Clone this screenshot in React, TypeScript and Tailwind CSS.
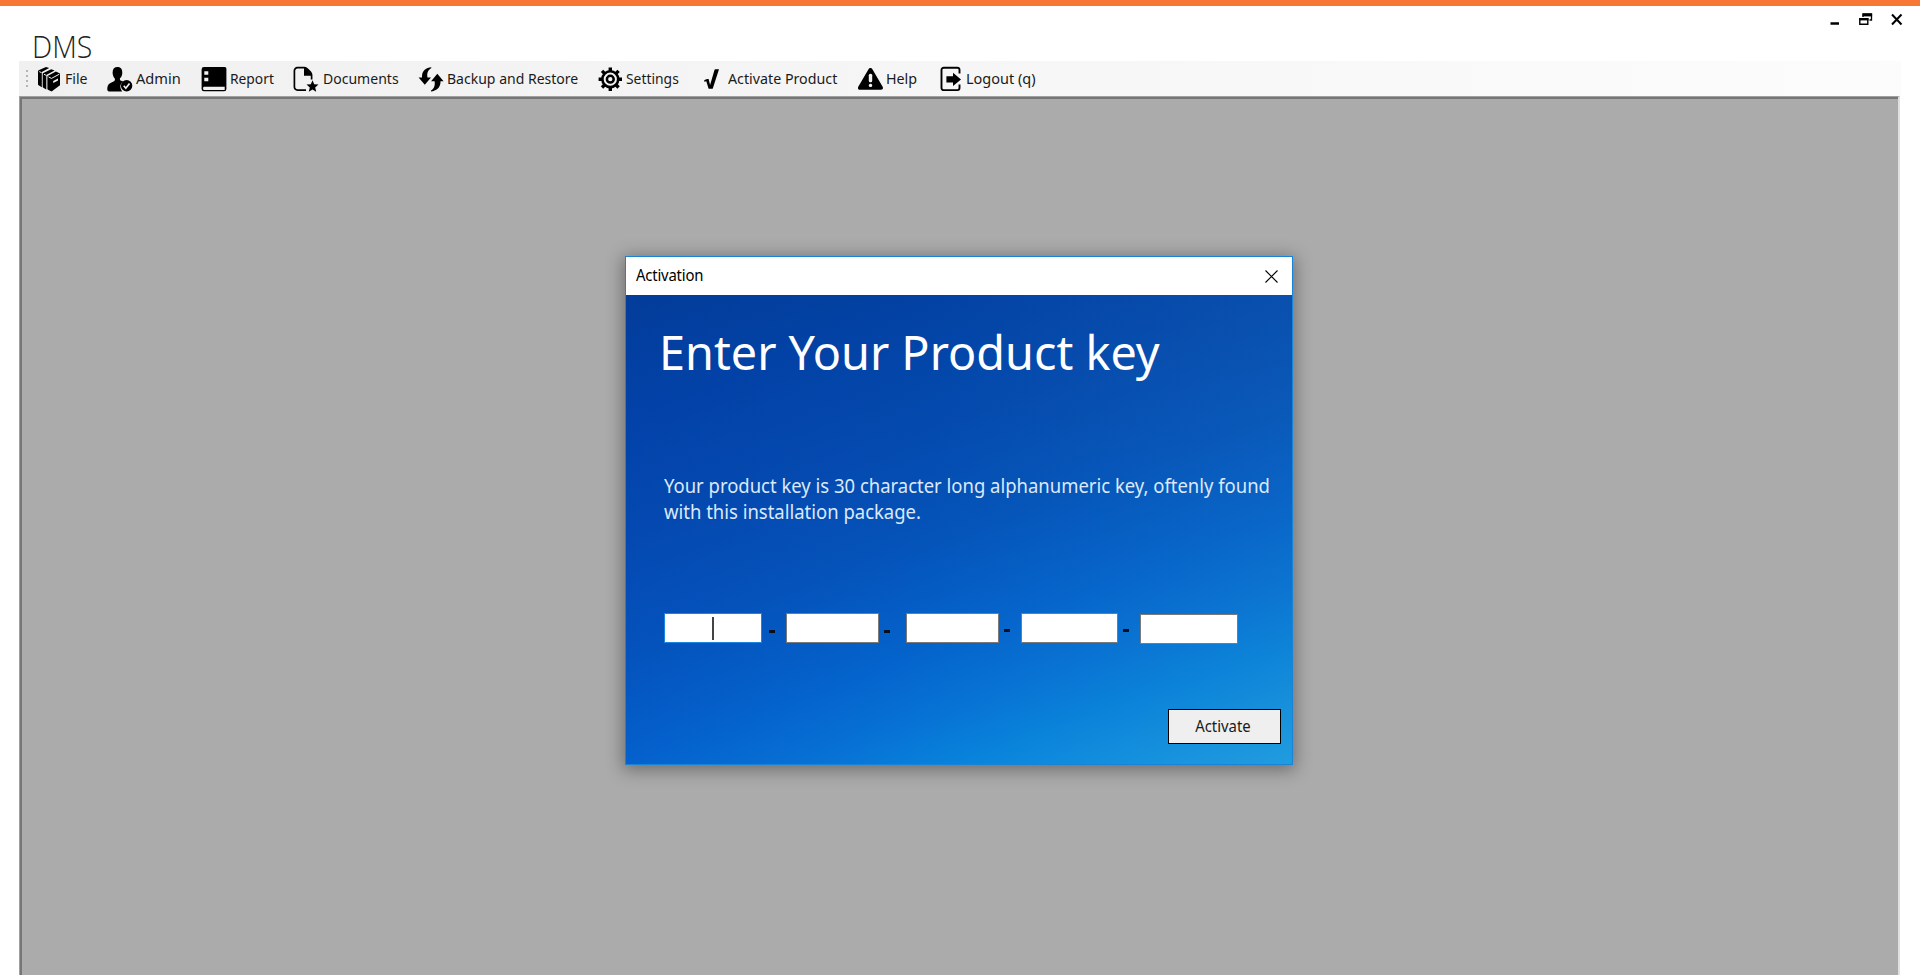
import type { ReactNode } from "react";

function Icon({ children }: { children: ReactNode }) {
  return (
    <svg className="h-[26px] w-[26px] shrink-0" viewBox="0 0 26 26" fill="#000">
      {children}
    </svg>
  );
}

const FileIcon = () => (
  <Icon>
    <path d="M1 5.200Q1 4.600 1.600 4.300L9 1l3.200 1-7.400 3.900V21.200L1.600 19.200Q1 18.800 1 18.200z" />
    <path d="M5.700 8Q5.700 7.300 6.300 7L14.200 3.200l3.400 1.200L9.300 8.900V23.600L6.300 21.800Q5.700 21.500 5.700 20.800z" />
    <path d="M10.400 10.800Q10.400 10.100 11 9.800L18.900 5.600 23 7.600V19.200L14.600 25.500 11 23.700Q10.400 23.400 10.400 22.700z" />
    <path d="m2.200 5.600 2.300 1M7 8.300l2.200 1M11.500 10.900l3 1.500 7.800-4.200" stroke="#f1f1f1" strokeWidth="1" fill="none" />
    <path d="m16.200 15 4.800-2.500v1.900l-4.800 2.600z" fill="#f1f1f1" />
  </Icon>
);

const AdminIcon = () => (
  <Icon>
    <path d="M5.600 6.400C5.600 2.800 7.600 1 10.400 1s4.900 1.800 4.900 5.400c0 2.300-.8 4.500-2.100 5.700-.5.600-.4 1.800.2 2.300l3 1.200c-2.500 1.300-3.900 4.600-2.400 7.700.4.900.7 1.500 1.200 2.100H2.200C.8 25.400.3 24.500.3 23.300.3 19 1.900 17.400 4.400 16.400l2.700-1.200c1-.6 1.100-2 .5-2.900-1.200-1.400-2-3.600-2-5.900z" />
    <circle cx="19.600" cy="19.700" r="5.700" />
    <path d="m16.800 19.800 2 2.400 3.700-4.800" fill="none" stroke="#f1f1f1" strokeWidth="1.700" />
  </Icon>
);

const ReportIcon = () => (
  <Icon>
    <path
      fillRule="evenodd"
      d="M3 1h20.500A1.700 1.700 0 0 1 25.400 2.700V23a2.300 2.300 0 0 1-2.300 2.300H2.900A2.300 2.300 0 0 1 .6 23V3.400A2.400 2.400 0 0 1 3 1zm.3 4.200v3.600h4V5.200zm0 6.500v3.600h4v-3.600zM3 20.700c-1.200 0-1.200 3.200 0 3.200h20.700v-3.200z"
    />
  </Icon>
);

const DocumentsIcon = () => (
  <Icon>
    <path
      d="M13 24.100H4.400a3 3 0 0 1-3-3V4.700a3 3 0 0 1 3-3h7.200c1.300 0 2 .5 2.800 1.300l3 3.200c.9 1 1.200 1.700 1.200 2.900v4.500"
      fill="none"
      stroke="#000"
      strokeWidth="1.700"
    />
    <path d="M11 2h1.800l5.900 6.200v1.500h-7.700z" />
    <path d="m19.500 14.300 1.700 4 4.300.3-3.300 2.900 1 4.300-3.700-2.300-3.700 2.300 1-4.300-3.300-2.900 4.300-.3z" />
  </Icon>
);

const BackupIcon = () => (
  <Icon>
    <path d="M13.300 1.300C8.300 1.600 4 4.500 4 10.400v1H.6l6.200 7.300 6.200-7.300H9.500C8.800 7.500 9.500 4.500 13.300 2z" />
    <path d="M13 25.400c5-.6 9.500-3.700 9.500-9.500v-.7h3.100L19.300 7.800l-6.200 7.400h3.500c.6 3.900-.2 7-3.600 9.400z" />
  </Icon>
);

const SettingsIcon = () => (
  <Icon>
    <g fill="none" stroke="#000">
      <circle cx="12.300" cy="13.200" r="7.900" strokeWidth="2.600" />
      <circle cx="12.300" cy="13.200" r="3.400" strokeWidth="2.500" />
      <path
        strokeWidth="3.400"
        d="M12.300 1.500v3.500M12.300 21.400v3.500M.6 13.200h3.500M20.500 13.200H24M4 4.900l2.500 2.500M18.100 19l2.500 2.500M4 21.500l2.500-2.500M18.100 7.400l2.500-2.500"
      />
    </g>
  </Icon>
);

const CheckIcon = () => (
  <Icon>
    <path d="M1.200 14.200c1.300-.9 2.900-1.300 4.400-1.300l1.500 6.200 4.300-14.900c.2-.8.600-1 1.300-1h3.300L9.700 22.700H5.600L3.300 15.300l-2 .5z" />
  </Icon>
);

const HelpIcon = () => (
  <Icon>
    <path d="M10.500 3.300c.9-1.800 3-1.800 3.900 0l10.100 17.200c1 1.700.3 3.200-1.500 3.200H1.900C.1 23.700-.6 22.200.4 20.500z" />
    <rect x="10.800" y="7.800" width="3.400" height="8.500" rx="1.500" fill="#f4f4f4" />
    <rect x="10.800" y="17.700" width="3.400" height="3.300" rx="1.500" fill="#f4f4f4" />
  </Icon>
);

const LogoutIcon = () => (
  <Icon>
    <path
      d="M19.500 7.500V3.700a2 2 0 0 0-2-2H3.700a2.200 2.200 0 0 0-2.200 2.200v18A2.200 2.200 0 0 0 3.700 24.100h13.800a2 2 0 0 0 2-2v-3.600"
      fill="none"
      stroke="#000"
      strokeWidth="1.900"
    />
    <path d="M6.400 10.300H13V6.800l8 6.600-8 6.500v-3.500H6.400z" />
  </Icon>
);

type Item = { label: string; icon: ReactNode; box: string; text: string };

const items: Item[] = [
  { label: "File", icon: <FileIcon />, box: "w-[70px]", text: "ml-[2px] scale-x-[0.94]" },
  { label: "Admin", icon: <AdminIcon />, box: "w-[94px]", text: "ml-[3px] scale-x-[0.975]" },
  { label: "Report", icon: <ReportIcon />, box: "w-[92px]", text: "ml-[3px] scale-x-[0.92]" },
  { label: "Documents", icon: <DocumentsIcon />, box: "w-[125px]", text: "ml-[4px] scale-x-[0.935]" },
  { label: "Backup and Restore", icon: <BackupIcon />, box: "w-[180px]", text: "ml-[3px] scale-x-[0.935]" },
  { label: "Settings", icon: <SettingsIcon />, box: "w-[105px]", text: "ml-[2px] scale-x-[0.925]" },
  { label: "Activate Product", icon: <CheckIcon />, box: "w-[155px]", text: "ml-0 scale-x-[0.95]" },
  { label: "Help", icon: <HelpIcon />, box: "w-[82px]", text: "ml-[2px] scale-x-[0.95]" },
  { label: "Logout (q)", icon: <LogoutIcon />, box: "w-[100px]", text: "ml-0 scale-x-[0.965]" },
];

const keyBoxes = [
  { box: "w-[98px] h-[30px] border-[#1a86e0]", dash: "pl-[7px] w-[24px] pt-[17px]" },
  { box: "w-[93px] h-[30px] border-[#7a7a7a]", dash: "pl-[5px] w-[27px] pt-[17px]" },
  { box: "w-[93px] h-[30px] border-[#7a7a7a]", dash: "pl-[5px] w-[22px] pt-[16px]" },
  { box: "w-[97px] h-[30px] border-[#7a7a7a]", dash: "pl-[5px] w-[22px] pt-[16px]" },
  { box: "mt-px w-[98px] h-[30px] border-[#7a7a7a]", dash: "" },
];

function Dialog() {
  return (
    <section className="flex h-[509px] w-[668px] flex-col border border-[#1883d7] bg-white shadow-[0_3px_16px_2px_rgba(0,0,0,0.36)]">
      <header className="flex h-[38px] shrink-0 items-center justify-between pr-[14px] pl-[10px]">
        <h2 className="origin-left scale-x-[0.96] text-[15.5px] tracking-[-0.2px] text-black">Activation</h2>
        <svg className="h-[13px] w-[13px]" viewBox="0 0 13 13" stroke="#000" strokeWidth="1.1">
          <path d="m.5.5 12 12M12.500.5l-12 12" />
        </svg>
      </header>
      <div className="flex flex-1 flex-col bg-[linear-gradient(90deg,rgba(0,64,208,0.10)_0%,rgba(0,64,208,0)_45%,rgba(60,130,170,0.10)_100%),linear-gradient(160deg,#033c94_0%,#0242a4_17%,#044aae_34%,#0454ba_50%,#0464cc_65%,#0773d5_75%,#0883dc_83%,#1e9fe5_100%)]">
        <h1 className="mt-[23px] ml-[33px] h-[69px] origin-left scale-x-[0.974] text-[48px] leading-[68px] whitespace-nowrap text-white">
          Enter Your Product key
        </h1>
        <p className="mt-[86px] ml-[38px] h-[57px] origin-left scale-x-[0.972] text-[19px] leading-[26px] whitespace-nowrap text-[#dce9f8]">
          Your product key is 30 character long alphanumeric key, oftenly found
          <br />
          with this installation package.
        </p>
        <div className="mt-[83px] ml-[38px] flex h-[31px] items-start">
          {keyBoxes.map((k, i) => (
            <div key={i} className="flex items-start">
              <div className={`flex items-center justify-center border bg-white ${k.box}`}>
                {i === 0 && <span className="h-[23px] w-[1.5px] bg-[#444]" />}
              </div>
              {k.dash && (
                <div className={k.dash}>
                  <div className="h-[3px] w-[6px] bg-[#04101c]" />
                </div>
              )}
            </div>
          ))}
        </div>
        <button className="mt-[65px] mr-[11px] h-[35px] w-[113px] self-end border border-black bg-[#efefef] text-[15.5px] leading-[33px] text-[#1a1a1a]">
          <span className="inline-block -translate-x-0.5 scale-x-[0.96]">Activate</span>
        </button>
      </div>
    </section>
  );
}

export default function App() {
  return (
    <div className="flex h-[975px] w-[1920px] flex-col overflow-hidden bg-white font-['Noto_Sans','Open_Sans',sans-serif]">
      <div className="h-[6px] shrink-0 bg-[#f77835]" />
      <div className="flex h-[55px] shrink-0 items-start justify-between">
        <div className="mt-[18px] ml-[32px] h-[44px] origin-left scale-x-[0.92] font-['Open_Sans','Noto_Sans',sans-serif] text-[31px] leading-[44px] font-light text-[#222]">
          DMS
        </div>
        <svg className="mt-[6px] mr-[15px] h-[15px] w-[76px]" viewBox="0 0 76 15" fill="none" stroke="#000">
          <path d="M1.500 11.500h8.500" strokeWidth="2.500" />
          <path d="M34 5V2H42.500V8h-2" strokeWidth="1.300" />
          <path d="M33.500 3h9.600" strokeWidth="2.800" />
          <path d="M30.800 7h8v5.200h-8z" strokeWidth="1.400" />
          <path d="M30.200 7.200h9.300" strokeWidth="2.400" />
          <path d="m63 2.500 9.500 10M72.500 2.500l-9.500 10" strokeWidth="2" />
        </svg>
      </div>
      <nav className="mr-[19px] ml-[19px] flex h-[35px] shrink-0 items-center bg-linear-to-r from-[#f0f0f0] to-[#fcfcfc]">
        <div className="ml-[7px] flex w-[11px] flex-col gap-[3px]">
          {[0, 1, 2, 3].map((n) => (
            <span key={n} className="h-[2px] w-[2px] bg-[#b4b4b4]" />
          ))}
        </div>
        {items.map((it) => (
          <div key={it.label} className={`flex shrink-0 items-center ${it.box}`}>
            {it.label === "Activate Product" ? <div className="w-[25px]">{it.icon}</div> : it.icon}
            <span className={`mb-[2px] origin-left text-[15px] leading-[20px] whitespace-nowrap text-[#1a1a1a] ${it.text}`}>
              {it.label}
            </span>
          </div>
        ))}
      </nav>
      <main className="mr-[20px] ml-[19px] flex flex-1 items-start border-t border-r-2 border-l border-t-[#a0a0a0] border-r-[#e0e0e0] border-l-[#a0a0a0] bg-[#ababab]">
        <div className="flex h-full w-full justify-start border-t-2 border-l-2 border-t-[#767676] border-l-[#767676] pt-[157px] pl-[603px]">
          <Dialog />
        </div>
      </main>
    </div>
  );
}
